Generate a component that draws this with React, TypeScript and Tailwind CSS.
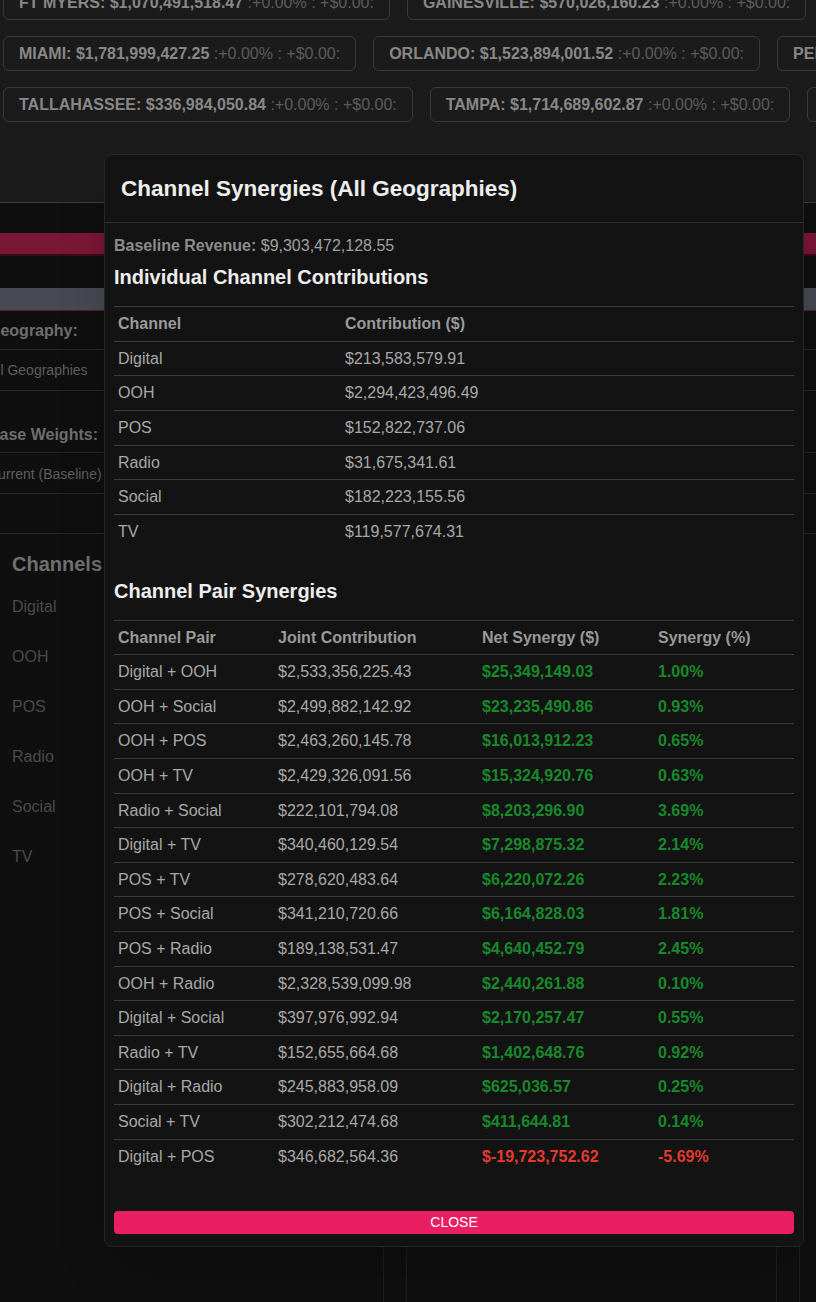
import React from "react";

const pillRows = [
  [
    { name: "FT MYERS", value: "$1,070,491,518.47" },
    { name: "GAINESVILLE", value: "$570,026,160.23" },
    { name: "JACKSONVILLE", value: "$1,402,113,904.10" },
  ],
  [
    { name: "MIAMI", value: "$1,781,999,427.25" },
    { name: "ORLANDO", value: "$1,523,894,001.52" },
    { name: "PENSACOLA", value: "$402,331,870.09" },
  ],
  [
    { name: "TALLAHASSEE", value: "$336,984,050.84" },
    { name: "TAMPA", value: "$1,714,689,602.87" },
    { name: "WEST PALM BEACH", value: "$903,421,166.40" },
  ],
];

const contributions = [
  ["Digital", "$213,583,579.91"],
  ["OOH", "$2,294,423,496.49"],
  ["POS", "$152,822,737.06"],
  ["Radio", "$31,675,341.61"],
  ["Social", "$182,223,155.56"],
  ["TV", "$119,577,674.31"],
];

const synergies = [
  ["Digital + OOH", "$2,533,356,225.43", "$25,349,149.03", "1.00%"],
  ["OOH + Social", "$2,499,882,142.92", "$23,235,490.86", "0.93%"],
  ["OOH + POS", "$2,463,260,145.78", "$16,013,912.23", "0.65%"],
  ["OOH + TV", "$2,429,326,091.56", "$15,324,920.76", "0.63%"],
  ["Radio + Social", "$222,101,794.08", "$8,203,296.90", "3.69%"],
  ["Digital + TV", "$340,460,129.54", "$7,298,875.32", "2.14%"],
  ["POS + TV", "$278,620,483.64", "$6,220,072.26", "2.23%"],
  ["POS + Social", "$341,210,720.66", "$6,164,828.03", "1.81%"],
  ["POS + Radio", "$189,138,531.47", "$4,640,452.79", "2.45%"],
  ["OOH + Radio", "$2,328,539,099.98", "$2,440,261.88", "0.10%"],
  ["Digital + Social", "$397,976,992.94", "$2,170,257.47", "0.55%"],
  ["Radio + TV", "$152,655,664.68", "$1,402,648.76", "0.92%"],
  ["Digital + Radio", "$245,883,958.09", "$625,036.57", "0.25%"],
  ["Social + TV", "$302,212,474.68", "$411,644.81", "0.14%"],
  ["Digital + POS", "$346,682,564.36", "$-19,723,752.62", "-5.69%"],
];

const channels = ["Digital", "OOH", "POS", "Radio", "Social", "TV"];

function Background() {
  return (
    <div className="absolute inset-0">
      <div className="h-[203px] bg-[#1b1b1b] border-b border-[#3d3d3d] overflow-hidden">
        <div className="-mt-[15px] flex flex-col gap-[16px] pl-[3px]">
          {pillRows.map((row, r) => (
            <div key={r} className="flex gap-[17px] whitespace-nowrap">
              {row.map((p) => (
                <div
                  key={p.name}
                  className="shrink-0 h-[35px] flex items-center px-[15px] rounded-md border border-[#3a3a3a] text-[16px]"
                >
                  <span className="font-bold text-[#888888]">
                    {p.name}: {p.value}
                  </span>
                  <span className="text-[#5c5c5c]">&nbsp;:+0.00% : +$0.00:</span>
                </div>
              ))}
            </div>
          ))}
        </div>
      </div>

      <div className="pt-[30px]">
        <div className="h-[23px] bg-[#7a1636] border-b-2 border-[#3a0b1b]" />
        <div className="h-[32px]" />
        <div className="h-[23px] bg-[#464953] border-b border-[#5a1a2c]" />
        <div className="-ml-3">
          <div className="h-[39px] flex items-center pt-[1px] border-b border-[#252525] text-[16px] font-bold text-[#6e6e6e]">
            Geography:
          </div>
          <div className="h-[41px] flex items-center pt-[1px] border-b border-[#252525] text-[14px] text-[#5e5e5e]">
            All Geographies
          </div>
          <div className="h-[62px] flex items-end pb-[5px] border-b border-[#252525] text-[16px] font-bold text-[#6e6e6e]">
            Base Weights:
          </div>
          <div className="h-[41px] flex items-center pt-[3px] border-b border-[#252525] text-[14px] text-[#5e5e5e]">
            Current (Baseline)
          </div>
          <div className="h-[40px] border-b border-[#252525]" />
        </div>

        <div className="flex h-[800px]">
          <div className="w-[384px] border-r border-[#1f1f1f] px-3 pt-[18px]">
            <div className="text-[20px] font-bold text-[#707070] leading-[24px]">Channels</div>
            <div className="flex flex-col mt-[6px]">
              {channels.map((c) => (
                <div key={c} className="h-[50px] flex items-center text-[16px] text-[#4a4a4a]">
                  {c}
                </div>
              ))}
            </div>
          </div>
          <div className="ml-[22px] w-[371px] border-x border-[#1f1f1f]" />
          <div className="ml-[22px] flex-1 border-l border-[#1f1f1f]" />
        </div>
      </div>
    </div>
  );
}

function Modal() {
  return (
    <div className="absolute left-[104px] top-[154px] w-[700px] bg-[#131313] border border-[#262626] rounded-lg shadow-2xl">
      <div className="h-[68px] flex items-center px-4 border-b border-[#2e2e2e]">
        <h2 className="text-[22.5px] font-bold text-[#eeeeee]">Channel Synergies (All Geographies)</h2>
      </div>
      <div className="px-[9px] pt-[14px] pb-3">
        <p className="text-[16px] leading-[18px] text-[#a0a0a0]">
          <span className="font-bold text-[#8c8c8c]">Baseline Revenue:</span> $9,303,472,128.55
        </p>
        <h3 className="mt-[11px] mb-[17px] text-[20px] leading-[23px] font-bold text-[#eeeeee]">
          Individual Channel Contributions
        </h3>
        <table className="w-full border-separate border-spacing-0 text-left text-[16px]">
          <thead>
            <tr>
              <th className="w-[227px] border-t border-[#3b3b3b] px-1 py-2 leading-[17.67px] font-bold text-[#9a9a9a]">Channel</th>
              <th className="border-t border-[#3b3b3b] px-1 py-2 leading-[17.67px] font-bold text-[#9a9a9a]">Contribution ($)</th>
            </tr>
          </thead>
          <tbody>
            {contributions.map(([c, v]) => (
              <tr key={c}>
                <td className="border-t border-[#3b3b3b] px-1 py-2 leading-[17.67px] text-[#a8a8a8]">{c}</td>
                <td className="border-t border-[#3b3b3b] px-1 py-2 leading-[17.67px] text-[#a8a8a8]">{v}</td>
              </tr>
            ))}
          </tbody>
        </table>

        <h3 className="mt-[31px] mb-[17px] text-[20px] leading-[23px] font-bold text-[#eeeeee]">Channel Pair Synergies</h3>
        <table className="w-full border-separate border-spacing-0 text-left text-[16px]">
          <thead>
            <tr>
              <th className="w-[160px] border-t border-[#3b3b3b] px-1 py-2 leading-[17.6px] font-bold text-[#9a9a9a]">Channel Pair</th>
              <th className="w-[204px] border-t border-[#3b3b3b] px-1 py-2 leading-[17.6px] font-bold text-[#9a9a9a]">Joint Contribution</th>
              <th className="w-[176px] border-t border-[#3b3b3b] px-1 py-2 leading-[17.6px] font-bold text-[#9a9a9a]">Net Synergy ($)</th>
              <th className="border-t border-[#3b3b3b] px-1 py-2 leading-[17.6px] font-bold text-[#9a9a9a]">Synergy (%)</th>
            </tr>
          </thead>
          <tbody>
            {synergies.map(([pair, joint, net, pct]) => {
              const negative = net.startsWith("$-");
              const tone = negative ? "text-[#e5392f]" : "text-[#17892b]";
              return (
                <tr key={pair}>
                  <td className="border-t border-[#3b3b3b] px-1 py-2 leading-[17.6px] text-[#a8a8a8]">{pair}</td>
                  <td className="border-t border-[#3b3b3b] px-1 py-2 leading-[17.6px] text-[#a8a8a8]">{joint}</td>
                  <td className={`border-t border-[#3b3b3b] px-1 py-2 leading-[17.6px] font-bold ${tone}`}>{net}</td>
                  <td className={`border-t border-[#3b3b3b] px-1 py-2 leading-[17.6px] font-bold ${tone}`}>{pct}</td>
                </tr>
              );
            })}
          </tbody>
        </table>

        <button className="mt-[38px] w-full h-[23px] rounded bg-[#e91e63] text-[14px] text-white leading-[23px]">
          CLOSE
        </button>
      </div>
    </div>
  );
}

export default function App() {
  return (
    <div className="relative h-[1302px] overflow-hidden bg-[#0f0f0f] font-['Liberation_Sans',Arial,sans-serif]">
      <Background />
      <Modal />
    </div>
  );
}
